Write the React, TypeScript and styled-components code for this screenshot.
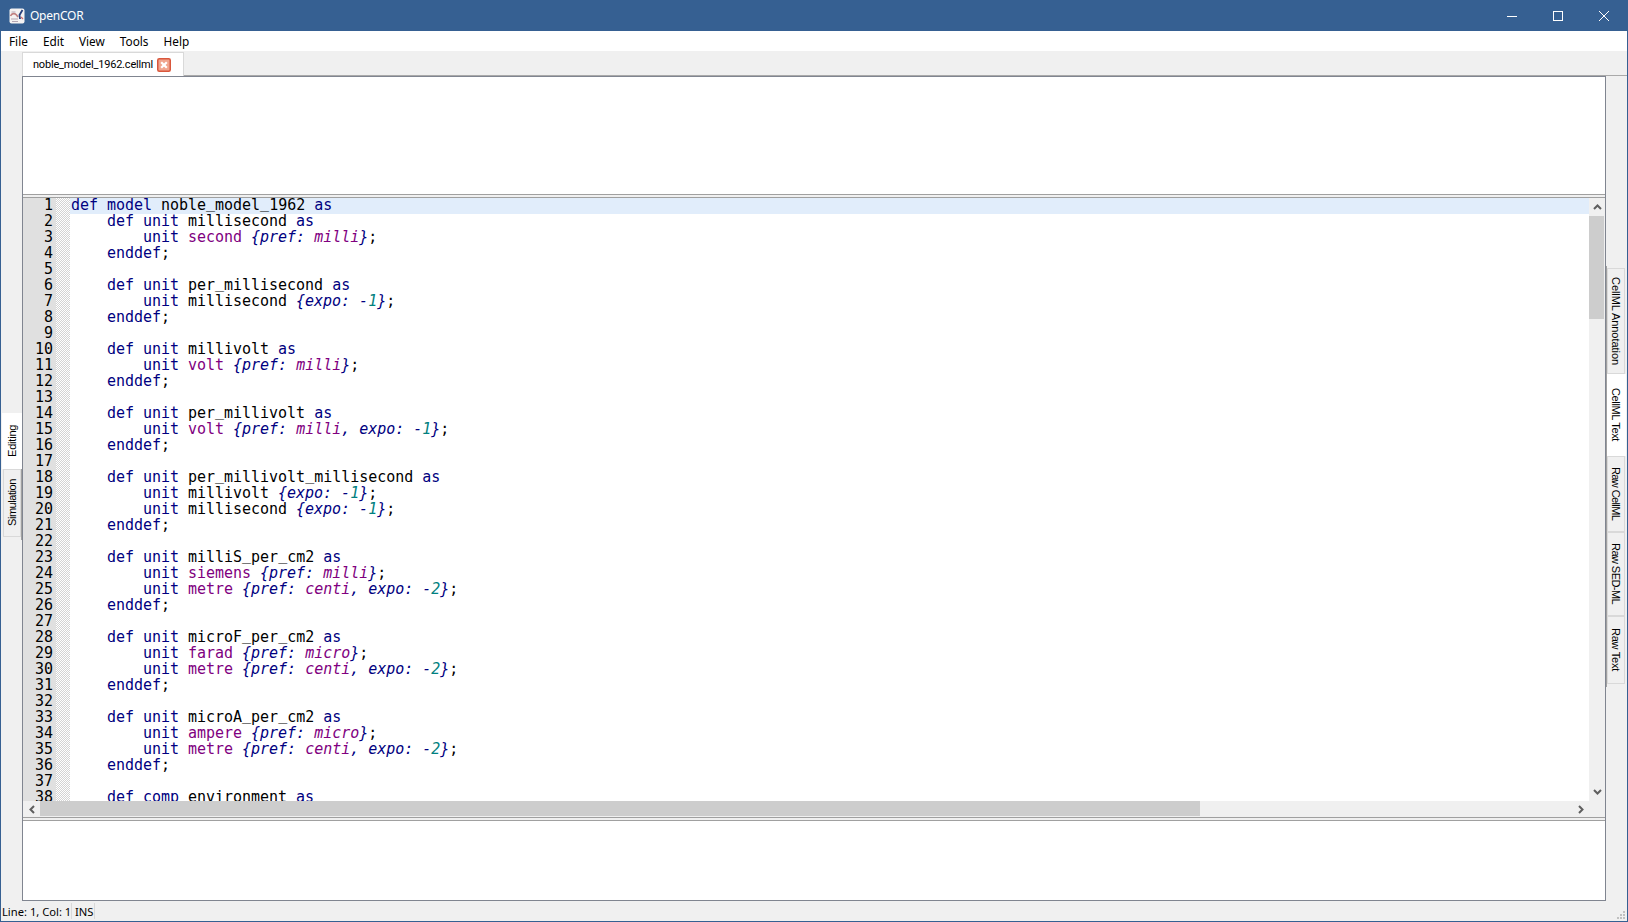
import React from 'react';
import styled, { createGlobalStyle } from 'styled-components';

const Global = createGlobalStyle`
  html, body { margin: 0; padding: 0; background: #f0f0f0; overflow: hidden; }
  * { box-sizing: border-box; }
`;

const UI = `"Noto Sans", "Open Sans", sans-serif`;
const ARIAL = `"Liberation Sans", Arial, sans-serif`;
const MONO = `"DejaVu Sans Mono", monospace`;

const Window = styled.div`
  width: 1628px; height: 922px; display: flex; flex-direction: column;
  border-left: 1px solid #366092; border-right: 1px solid #366092; border-bottom: 1px solid #366092;
  background: #f0f0f0; overflow: hidden;
`;
const TitleBar = styled.div`
  height: 31px; margin-left: -1px; margin-right: -1px; background: #366092; display: flex; align-items: center;
  padding-left: 9px; padding-right: 1px; color: #fff; font: 12px ${UI}; flex: none;
`;
const AppIcon = styled.svg`width: 16px; height: 16px; margin-right: 5px;`;
const TitleText = styled.span`flex: 1; letter-spacing: -0.25px;`;
const WinButton = styled.div`
  width: 46px; height: 31px; display: flex; align-items: center; justify-content: center;
`;
const MenuBar = styled.div`
  height: 20px; background: #fff; display: flex; font: 11.8px ${UI}; color: #000; padding-left: 8px; gap: 15px; align-items: center; flex: none;
`;
const TabStrip = styled.div`
  height: 25px; flex: none; padding-left: 21px; display: flex; align-items: flex-end;
`;
const FileTab = styled.div`
  width: 162px; height: 24px; background: #fff; border: 1px solid #d9d9d9; border-bottom: none; flex: none;
  display: flex; align-items: center; padding-left: 10px; gap: 4px; font: 11px ${`Roboto, "Noto Sans", sans-serif`}; letter-spacing: -0.2px; color: #000; white-space: nowrap;
`;
const TabLine = styled.div`flex: 1; height: 1px; background: #a9a9a9;`;
const Close = styled.svg`width: 14px; height: 14px; flex: none;`;
const Body = styled.div`display: flex; height: 825px; flex: none;`;
const LeftRail = styled.div`
  width: 21px; flex: none; display: flex; flex-direction: column; padding-top: 337px; align-items: flex-end; position: relative;
`;
const LeftRailLine = styled.div`width: 1px; position: absolute; right: 0; top: 393px; height: 71px; background: #a0a0a0;`;
const Side = styled.div<{ $active?: boolean; $h: number; $right?: boolean; $track?: number }>`
  height: ${p => p.$h}px;
  writing-mode: vertical-rl;
  transform: ${p => (p.$right ? 'none' : 'rotate(180deg)')};
  display: flex; align-items: center; justify-content: center;
  font: 11px ${ARIAL}; color: #000; flex: none;
  letter-spacing: ${p => p.$track ?? 0}px;
  background: ${p => (p.$active ? '#fff' : '#f0f0f0')};
  width: ${p => (p.$active ? 20 : 18)}px;
  border: ${p => (p.$active ? 'none' : '1px solid #d9d9d9')};
`;
const LeftSide = styled(Side)`
  margin-right: ${p => (p.$active ? 0 : 1)}px;
`;
const Main = styled.div`
  width: 1584px; height: 825px; flex: none; display: flex; flex-direction: column;
  border: 1px solid #808590; background: #fff;
`;
const TopPane = styled.div`height: 117px; background: #fff; flex: none;`;
const Splitter = styled.div`
  height: 4px; flex: none; background: #f0f0f0; border-top: 1px solid #a0a0a0; border-bottom: 1px solid #a0a0a0;
`;
const BottomPane = styled.div`flex: 1; background: #fff;`;
const Editor = styled.div`height: 619px; flex: none; display: grid; grid-template-columns: 1fr 16px; grid-template-rows: 603px 16px;`;
const CodeArea = styled.div`display: flex; overflow: hidden; background: #fff;`;
const Gutter = styled.div`width: 33px; flex: none; background: #e0e0e0; text-align: right; padding-right: 3px;`;
const Fold = styled.div`
  width: 14px; flex: none; background: repeating-conic-gradient(#d4d4d4 0 25%, #fff 0 50%) 0 0 / 2px 2px;
`;
const Code = styled.div`flex: 1; padding-left: 1px; min-width: 0;`;
const Row = styled.div<{ $current?: boolean }>`
  height: 16px; white-space: pre; font: 15px/14px ${MONO}; letter-spacing: -0.03px;
  margin-left: ${p => (p.$current ? -1 : 0)}px;
  padding-left: ${p => (p.$current ? 1 : 0)}px;
  background: ${p => (p.$current ? '#e1edfb' : 'transparent')};
  color: #000;
`;
const LineNo = styled.div`height: 16px; font: 15px/14px ${MONO}; color: #000;`;
const Tok = styled.span<{ $k: string }>`
  color: ${p => ({ kw: '#000080', id: '#000', unit: '#800080', num: '#008080', p: '#000' }[p.$k] ?? '#000')};
`;
const Under = styled.span`position: relative; top: -2px;`;
const Ital = styled.span<{ $k: string }>`
  font-style: italic;
  color: ${p => ({ kw: '#000080', unit: '#800080', num: '#008080' }[p.$k] ?? '#000080')};
`;
const VBar = styled.div`background: #f0f0f0; display: flex; flex-direction: column;`;
const VBtn = styled.div`height: 18px; flex: none; display: flex; align-items: center; justify-content: center;`;
const VThumb = styled.div`height: 103px; flex: none; width: 15px; background: #cdcdcd;`;
const VTrack = styled.div`flex: 1;`;
const HBar = styled.div`background: #f0f0f0; display: flex;`;
const HBtn = styled.div`width: 17px; flex: none; display: flex; align-items: center; justify-content: center;`;
const HThumb = styled.div`width: 1160px; flex: none; height: 15px; background: #cdcdcd;`;
const HTrack = styled.div`flex: 1;`;
const Corner = styled.div`background: #f0f0f0;`;
const RightRail = styled.div`
  width: 20px; flex: none; display: flex; flex-direction: column; padding-top: 192px; align-items: flex-start; position: relative;
`;
const RailLine = styled.div`width: 1px; position: absolute; left: 0; top: 190px; height: 421px; background: #a0a0a0;`;
const RightTab = styled(Side)`
  margin-left: ${p => (p.$active ? 0 : 1)}px;
`;
const StatusBar = styled.div`
  flex: 1; display: flex; align-items: center; padding-left: 1px; font: 11.2px ${UI}; color: #000; position: relative;
`;
const Cell = styled.div<{ $w: number }>`
  width: ${p => p.$w}px; height: 16px; display: flex; align-items: center; border-right: 1px solid #d9d9d9; padding-left: ${p => (p.$w < 40 ? 3 : 0)}px; white-space: nowrap; flex: none;
`;
const Grip = styled.svg`position: absolute; right: 2px; bottom: 2px; width: 8px; height: 8px;`;

const Chev = ({ d }: { d: 'up' | 'down' | 'left' | 'right' }) => {
  const paths = {
    up: 'M1 6 L4.5 2.5 L8 6',
    down: 'M1 2 L4.5 5.5 L8 2',
    left: 'M6 1 L2.5 4.5 L6 8',
    right: 'M2 1 L5.5 4.5 L2 8',
  };
  const horiz = d === 'left' || d === 'right';
  return (
    <svg width={horiz ? 8 : 9} height={horiz ? 9 : 8} viewBox={horiz ? '0 0 8 9' : '0 0 9 8'}>
      <path d={paths[d]} fill="none" stroke="#5f5f5f" strokeWidth="2" />
    </svg>
  );
};

const rows = [
  'def model noble_model_1962 as',
  '    def unit millisecond as',
  '        unit second {pref: milli};',
  '    enddef;',
  '',
  '    def unit per_millisecond as',
  '        unit millisecond {expo: -1};',
  '    enddef;',
  '',
  '    def unit millivolt as',
  '        unit volt {pref: milli};',
  '    enddef;',
  '',
  '    def unit per_millivolt as',
  '        unit volt {pref: milli, expo: -1};',
  '    enddef;',
  '',
  '    def unit per_millivolt_millisecond as',
  '        unit millivolt {expo: -1};',
  '        unit millisecond {expo: -1};',
  '    enddef;',
  '',
  '    def unit milliS_per_cm2 as',
  '        unit siemens {pref: milli};',
  '        unit metre {pref: centi, expo: -2};',
  '    enddef;',
  '',
  '    def unit microF_per_cm2 as',
  '        unit farad {pref: micro};',
  '        unit metre {pref: centi, expo: -2};',
  '    enddef;',
  '',
  '    def unit microA_per_cm2 as',
  '        unit ampere {pref: micro};',
  '        unit metre {pref: centi, expo: -2};',
  '    enddef;',
  '',
  '    def comp environment as',
];

const BUILTIN = new Set(['second', 'volt', 'siemens', 'metre', 'farad', 'ampere']);
const KW = new Set(['def', 'model', 'unit', 'as', 'enddef', 'comp']);

function renderWord(w: string) {
  return w.split(/(_)/).map((part, i) => (part === '_' ? <Under key={i}>_</Under> : part));
}

function renderRow(s: string) {
  const m = s.match(/^(.*?)(\{.*\})(.*)$/);
  const head = m ? m[1] : s;
  const out: React.ReactNode[] = [];
  head.split(/(\s+|;)/).forEach((w, i) => {
    if (!w) return;
    const k = KW.has(w) ? 'kw' : BUILTIN.has(w) ? 'unit' : 'id';
    out.push(<Tok key={`h${i}`} $k={k}>{renderWord(w)}</Tok>);
  });
  if (m) {
    m[2].split(/(pref|expo|milli|centi|micro|\d)/).forEach((w, i) => {
      if (!w) return;
      const k = /^(milli|centi|micro)$/.test(w) ? 'unit' : /^\d$/.test(w) ? 'num' : 'kw';
      out.push(<Ital key={`p${i}`} $k={k}>{w}</Ital>);
    });
    out.push(<Tok key="t" $k="p">{m[3]}</Tok>);
  }
  return out;
}

export default function App() {
  return (
    <Window>
      <Global />
      <TitleBar>
        <AppIcon viewBox="0 0 16 16">
          <rect x="0.5" y="0.5" width="15" height="15" rx="2" fill="#f4f2f2" />
          <path d="M1.5 8 C3 5 6 5 7.5 7 L9 9" fill="none" stroke="#c07f7f" strokeWidth="1.6" />
          <path d="M2 11 h7 M3 13.5 h6 M2.5 4 h4" stroke="#b3a6b3" strokeWidth="1.2" />
          <path d="M13.5 2 L10.5 7 L11 11" fill="none" stroke="#27407c" strokeWidth="1.8" />
          <path d="M12 9 L14 11" stroke="#d26a6a" strokeWidth="1.2" />
        </AppIcon>
        <TitleText>OpenCOR</TitleText>
        <WinButton>
          <svg width="10" height="10" viewBox="0 0 10 10"><path d="M0 5.5 H10" stroke="#fff" /></svg>
        </WinButton>
        <WinButton>
          <svg width="10" height="10" viewBox="0 0 10 10"><rect x="0.5" y="0.5" width="9" height="9" fill="none" stroke="#fff" /></svg>
        </WinButton>
        <WinButton>
          <svg width="10" height="10" viewBox="0 0 10 10"><path d="M0 0 L10 10 M10 0 L0 10" stroke="#fff" /></svg>
        </WinButton>
      </TitleBar>
      <MenuBar>
        <span>File</span><span>Edit</span><span>View</span><span>Tools</span><span>Help</span>
      </MenuBar>
      <TabStrip>
        <FileTab>
          noble_model_1962.cellml
          <Close viewBox="0 0 14 14">
            <rect x="0.75" y="0.75" width="12.5" height="12.5" rx="1.5" fill="#f0a58e" stroke="#d9573c" strokeWidth="1.5" />
            <path d="M4.2 4.2 L9.8 9.8 M9.8 4.2 L4.2 9.8" stroke="#fff" strokeWidth="2.2" />
          </Close>
        </FileTab>
        <TabLine />
      </TabStrip>
      <Body>
        <LeftRail>
          <LeftRailLine />
          <LeftSide $active $h={56} $track={-0.2}>Editing</LeftSide>
          <LeftSide $h={68} $track={-0.45}>Simulation</LeftSide>
        </LeftRail>
        <Main>
          <TopPane />
          <Splitter />
          <Editor>
            <CodeArea>
              <Gutter>{rows.map((_, i) => <LineNo key={i}>{i + 1}</LineNo>)}</Gutter>
              <Fold />
              <Code>
                {rows.map((r, i) => <Row key={i} $current={i === 0}>{renderRow(r)}</Row>)}
              </Code>
            </CodeArea>
            <VBar>
              <VBtn><Chev d="up" /></VBtn>
              <VThumb />
              <VTrack />
              <VBtn><Chev d="down" /></VBtn>
            </VBar>
            <HBar>
              <HBtn><Chev d="left" /></HBtn>
              <HThumb />
              <HTrack />
              <HBtn><Chev d="right" /></HBtn>
            </HBar>
            <Corner />
          </Editor>
          <Splitter />
          <BottomPane />
        </Main>
        <RightRail>
          <RailLine />
          <RightTab $right $h={106} $track={-0.05}>CellML Annotation</RightTab>
          <RightTab $right $active $h={82} $track={-0.35}>CellML Text</RightTab>
          <RightTab $right $h={76} $track={-0.6}>Raw CellML</RightTab>
          <RightTab $right $h={84} $track={-0.55}>Raw SED-ML</RightTab>
          <RightTab $right $h={68} $track={-0.25}>Raw Text</RightTab>
        </RightRail>
      </Body>
      <StatusBar>
        <Cell $w={70}>Line: 1, Col: 1</Cell>
        <Cell $w={23}>INS</Cell>
        <Grip viewBox="0 0 8 8">
          <g fill="#c0c0c0">
            <rect x="6" y="0" width="2" height="2" />
            <rect x="3" y="3" width="2" height="2" /><rect x="6" y="3" width="2" height="2" />
            <rect x="0" y="6" width="2" height="2" /><rect x="3" y="6" width="2" height="2" /><rect x="6" y="6" width="2" height="2" />
          </g>
        </Grip>
      </StatusBar>
    </Window>
  );
}
